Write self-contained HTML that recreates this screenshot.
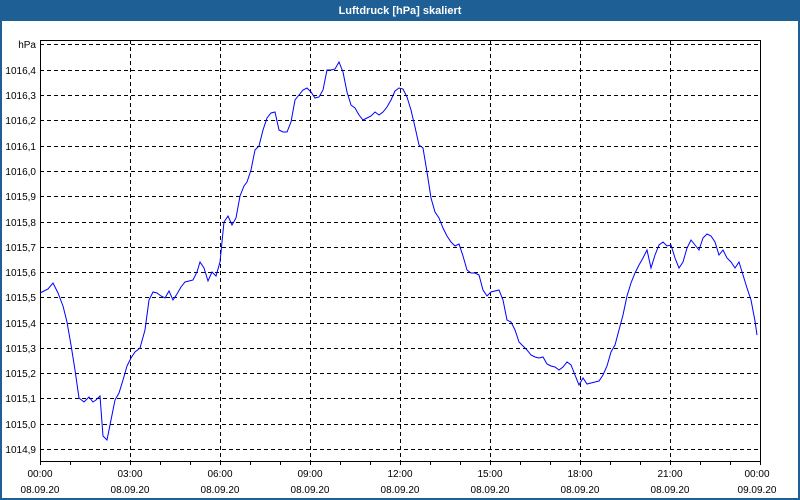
<!DOCTYPE html>
<html><head><style>
body{margin:0;width:800px;height:500px;overflow:hidden;background:#fff;font-family:"Liberation Sans",sans-serif}
</style></head><body>
<svg width="800" height="500" xmlns="http://www.w3.org/2000/svg" style="position:absolute;left:0;top:0">
<rect x="0" y="0" width="800" height="500" fill="#1e5f96"/>
<rect x="2" y="21" width="796" height="477" fill="#fff"/>
<text x="400" y="14" fill="#fff" font-size="11" font-weight="bold" text-anchor="middle" font-family="Liberation Sans, sans-serif">Luftdruck [hPa] skaliert</text>
<g stroke="#000" stroke-width="1" stroke-dasharray="4,3" fill="none">
<path d="M40 44.5H760M40 70.5H760M40 95.5H760M40 120.5H760M40 146.5H760M40 171.5H760M40 196.5H760M40 222.5H760M40 247.5H760M40 272.5H760M40 297.5H760M40 323.5H760M40 348.5H760M40 373.5H760M40 398.5H760M40 424.5H760M40 449.5H760"/>
<path d="M130.5 40V461M220.5 40V461M310.5 40V461M400.5 40V461M490.5 40V461M580.5 40V461M670.5 40V461"/>
</g>
<g stroke="#000" stroke-width="1" fill="none">
<path d="M40.5 40V465M40 461.5H760M760.5 40V465M40 40.5H760"/>
<path d="M70.5 461V465M100.5 461V465M130.5 461V465M160.5 461V465M190.5 461V465M220.5 461V465M250.5 461V465M280.5 461V465M310.5 461V465M340.5 461V465M370.5 461V465M400.5 461V465M430.5 461V465M460.5 461V465M490.5 461V465M520.5 461V465M550.5 461V465M580.5 461V465M610.5 461V465M640.5 461V465M670.5 461V465M700.5 461V465M730.5 461V465"/>
</g>
<g font-size="10" fill="#000" text-anchor="end" font-family="Liberation Sans, sans-serif">
<text x="36" y="48">hPa</text>
<text x="36" y="74">1016,4</text><text x="36" y="99">1016,3</text><text x="36" y="124">1016,2</text><text x="36" y="150">1016,1</text><text x="36" y="175">1016,0</text><text x="36" y="200">1015,9</text><text x="36" y="226">1015,8</text><text x="36" y="251">1015,7</text><text x="36" y="276">1015,6</text><text x="36" y="301">1015,5</text><text x="36" y="327">1015,4</text><text x="36" y="352">1015,3</text><text x="36" y="377">1015,2</text><text x="36" y="402">1015,1</text><text x="36" y="428">1015,0</text><text x="36" y="453">1014,9</text>
</g>
<g font-size="10" fill="#000" text-anchor="middle" font-family="Liberation Sans, sans-serif">
<text x="40" y="477">00:00</text><text x="40" y="493">08.09.20</text>
<text x="130" y="477">03:00</text><text x="130" y="493">08.09.20</text>
<text x="220" y="477">06:00</text><text x="220" y="493">08.09.20</text>
<text x="310" y="477">09:00</text><text x="310" y="493">08.09.20</text>
<text x="400" y="477">12:00</text><text x="400" y="493">08.09.20</text>
<text x="490" y="477">15:00</text><text x="490" y="493">08.09.20</text>
<text x="580" y="477">18:00</text><text x="580" y="493">08.09.20</text>
<text x="670" y="477">21:00</text><text x="670" y="493">08.09.20</text>
<text x="757" y="477">00:00</text><text x="757" y="493">09.09.20</text>
</g>
<polyline fill="none" stroke="#0000ff" stroke-width="1" points="40,293 48,289 53,283 58,293 63,306 67,322 71,345 75,370 79,398 84,402 89,397 93,402 96,400 100,396 103,436 107,440 111,420 115,400 119,393 123,380 127,366 131,358 135,352 140,348 145,330 149,300 153,292 157,293 161,296 165,298 169,291 173,300 177,294 181,287 185,282 189,281 193,280 197,272 200,262 204,268 208,281 212,272 216,276 220,262 224,222 228,216 232,225 236,218 240,196 244,186 247,182 251,170 255,150 259,146 263,130 267,118 271,113 275,112 279,130 283,132 287,132 291,122 295,100 299,95 303,90 307,88 311,92 315,98 319,97 323,90 327,70 331,70 335,69 339,62 343,72 347,92 351,105 355,108 359,115 363,120 367,118 371,116 375,112 379,115 383,112 387,107 391,100 395,91 399,88 403,89 407,97 411,110 415,127 419,145 423,148 427,172 431,198 435,212 439,218 443,228 447,236 451,242 455,246 459,244 463,256 467,270 471,273 475,273 479,275 483,290 487,296 491,292 495,291 499,290 503,300 507,320 511,322 515,330 519,342 523,346 527,350 531,355 535,357 539,358 543,357 547,364 551,366 555,367 559,370 563,367 567,362 571,365 575,375 579,385 583,378 587,384 591,383 595,382 599,381 603,375 607,366 611,352 615,345 619,330 623,315 627,296 631,283 635,273 639,265 643,258 647,250 651,268 655,255 659,245 663,242 667,246 671,245 675,258 679,268 683,262 687,248 691,240 695,245 699,250 703,238 707,234 711,236 715,242 719,255 723,250 727,258 731,262 735,268 739,262 743,275 747,288 751,300 755,321 757,335"/>
</svg>
</body></html>
